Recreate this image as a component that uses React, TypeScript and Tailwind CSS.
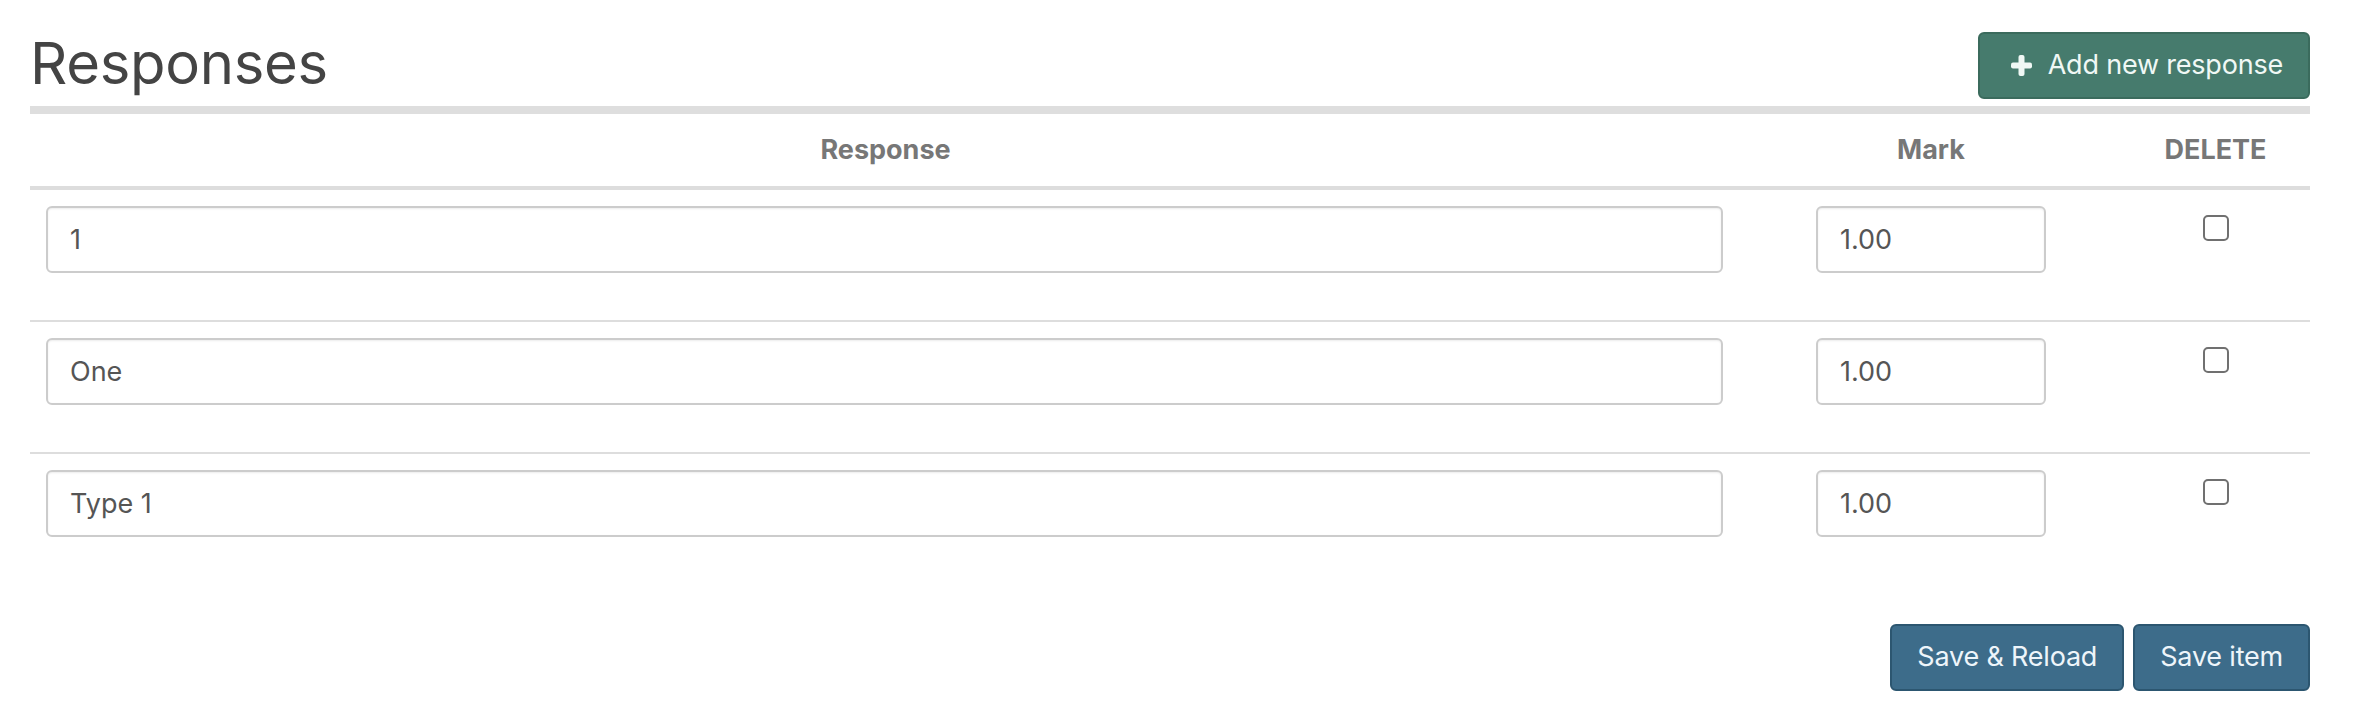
import * as React from 'react';

type Row = { id: number; response: string; mark: string };

const rows: Row[] = [
  { id: 1, response: '1', mark: '1.00' },
  { id: 2, response: 'One', mark: '1.00' },
  { id: 3, response: 'Type 1', mark: '1.00' },
];

const font = { fontFamily: 'Inter, "Noto Sans", "Liberation Sans", sans-serif' };

const inputClasses =
  'h-[67px] rounded-[6px] border-2 border-[#cccccc] bg-white px-[22px] text-[27px] text-[#555555] shadow-[inset_0_1px_2px_rgba(0,0,0,0.08)] outline-none';

function PlusIcon() {
  return (
    <svg width="21" height="21" viewBox="0 0 21 21" aria-hidden="true">
      <rect x="7.5" y="0" width="6" height="21" rx="2" fill="currentColor" />
      <rect x="0" y="7.5" width="21" height="6" rx="2" fill="currentColor" />
    </svg>
  );
}

function ResponseRow({ row, last }: { row: Row; last: boolean }) {
  return (
    <div
      className={
        'grid grid-cols-[minmax(0,1fr)_380px_189px] ' +
        (last ? '' : 'border-b-2 border-[#dddddd]')
      }
    >
      <div className="pl-4 pr-[18px] pt-4 pb-[47px]">
        <input className={inputClasses + ' w-full'} defaultValue={row.response} />
      </div>
      <div className="flex justify-center pt-4">
        <input className={inputClasses + ' w-[230px]'} defaultValue={row.mark} />
      </div>
      <div className="flex justify-center pt-[25px]">
        <input
          type="checkbox"
          className="h-[26px] w-[26px] appearance-none rounded-[5px] border-2 border-[#707070] bg-white"
        />
      </div>
    </div>
  );
}

export default function App() {
  return (
    <div className="min-h-[718px] w-full bg-white pl-[30px] pr-[46px]" style={font}>
      <div className="flex items-start justify-between border-b-8 border-[#dedede] pt-8 pb-[7px]">
        <h2 className="-mt-[2px] text-[58px] leading-[67px] font-normal tracking-[-0.3px] text-[#444444]">
          Responses
        </h2>
        <button className="flex h-[67px] items-center gap-4 rounded-[6px] border-2 border-[#3b6b5d] bg-[#467b6d] pl-[31px] pr-[25px] text-[27px] tracking-[-0.2px] text-[#f0f8f5]">
          <PlusIcon />
          <span>Add new response</span>
        </button>
      </div>

      <div className="grid grid-cols-[minmax(0,1fr)_380px_189px] border-b-4 border-[#dddddd] text-[27px] font-bold leading-[72px] text-[#777777]">
        <div className="text-center">Response</div>
        <div className="text-center">Mark</div>
        <div className="text-center">DELETE</div>
      </div>

      {rows.map((row, i) => (
        <ResponseRow key={row.id} row={row} last={i === rows.length - 1} />
      ))}

      <div className="mt-10 flex justify-end gap-[9px]">
        <button className="h-[67px] rounded-[6px] border-2 border-[#2c5670] bg-[#3d6c8a] px-[25px] text-[27px] tracking-[-0.2px] text-[#eef5fa]">
          Save &amp; Reload
        </button>
        <button className="h-[67px] rounded-[6px] border-2 border-[#2c5670] bg-[#3d6c8a] px-[25px] text-[27px] tracking-[-0.2px] text-[#eef5fa]">
          Save item
        </button>
      </div>
    </div>
  );
}
